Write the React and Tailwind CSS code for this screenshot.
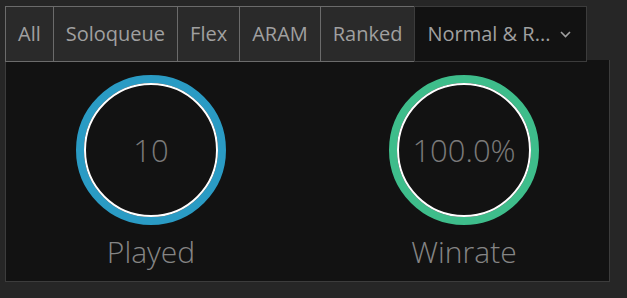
import { useState } from "react";

const tabs = ["All", "Soloqueue", "Flex", "ARAM", "Ranked"];

function Ring({ color, value, label }) {
  return (
    <div className="flex flex-col items-center w-[150px]">
      <div
        className="w-[150px] h-[150px] rounded-full border-[8px] flex items-center justify-center"
        style={{ borderColor: color }}
      >
        <div className="w-full h-full rounded-full border-2 border-white flex items-center justify-center">
          <span className="text-[31px] font-light text-[#7a7a7a] leading-none">{value}</span>
        </div>
      </div>
      <span className="mt-[12px] text-[30px] font-light text-[#858585] leading-none">{label}</span>
    </div>
  );
}

export default function App() {
  const [active] = useState("Normal & R...");

  return (
    <div className="w-[627px] h-[298px] bg-[#262626] pl-[5px] pt-[6px] font-['Open_Sans',sans-serif]">
      {/* Tabs */}
      <div className="flex h-[56px]">
        {tabs.map((t, i) => (
          <div
            key={t}
            className={`flex items-center whitespace-nowrap px-[12px] bg-[#2a2a2a] border border-[#6b6b6b] text-[20px] text-[#a0a0a0] ${i > 0 ? "-ml-px" : ""}`}
          >
            {t}
          </div>
        ))}
        <div className="flex items-center justify-between whitespace-nowrap -ml-px pl-[12px] pr-[15px] bg-[#121212] border border-[#3c3c3c] text-[20px] text-[#a0a0a0] w-[173px]">
          {active}
          <svg width="11" height="7" viewBox="0 0 11 7" fill="none">
            <path d="M1 1l4.5 4.5L10 1" stroke="#a0a0a0" strokeWidth="1.6" />
          </svg>
        </div>
      </div>

      {/* Panel */}
      <div className="-mt-[2px] w-[605px] h-[222px] bg-[#121212] border border-[#3c3c3c] border-t-0 flex pt-[15px] pl-[70px]">
        <Ring color="#2a9bc4" value="10" label="Played" />
        <div className="ml-[163px]">
          <Ring color="#3ebd8b" value="100.0%" label="Winrate" />
        </div>
      </div>
    </div>
  );
}
